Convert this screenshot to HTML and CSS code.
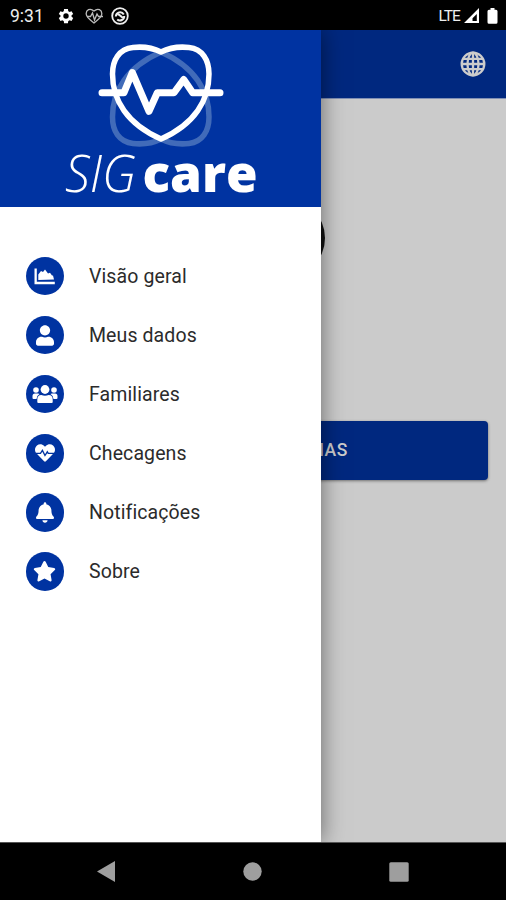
FILE: index.html
```html
<!DOCTYPE html>
<html lang="pt-BR">
<head>
<meta charset="utf-8">
<title>SIGcare</title>
<link rel="stylesheet" href="styles.css">
</head>
<body>
<div class="phone">
  <header class="status">
    <span class="clock">9:31</span>
    <svg class="gear" viewBox="0 0 24 24"><path fill="#fff" fill-rule="evenodd" d="M19.400 13a7.500 7.500 0 0 0 0-2l2.200-1.700-2.200-3.800-2.600 1a7.600 7.600 0 0 0-1.800-1L14.600 2.500h-5.200L9 5.500a7.600 7.600 0 0 0-1.800 1l-2.600-1-2.200 3.800L4.600 11a7.500 7.500 0 0 0 0 2l-2.200 1.700 2.200 3.800 2.600-1a7.600 7.600 0 0 0 1.800 1l.4 3h5.200l.4-3a7.600 7.600 0 0 0 1.800-1l2.600 1 2.200-3.800zM12 15.600a3.600 3.600 0 1 1 0-7.200 3.600 3.600 0 0 1 0 7.200z"/></svg>
    <svg class="beat" viewBox="0 0 18 16" fill="none" stroke="#bbb" stroke-width="1.300"><path d="M9 3C5-.5 1 2 1.200 6c.2 3.500 4.800 6.500 7.800 9 3-2.500 7.600-5.500 7.800-9C17 2 13-.5 9 3z"/><path d="M2 8.500h3.500L7.500 5l2 7 2.500-6 1.500 2.500H18"/></svg>
    <svg class="ring" viewBox="0 0 18 18" fill="none" stroke="#eee"><circle cx="9" cy="9" r="7.800" stroke-width="1.800"/><path d="M4.800 9.500a4.300 4.300 0 0 1 8-2M13.200 9a4.300 4.300 0 0 1-7 3.500M6.500 7.500c3-.5 3 3 6.500 3.500" stroke-width="2"/></svg>
    <span class="lte">LTE</span>
    <svg class="signal" viewBox="0 0 15 15"><path fill="#fff" fill-rule="evenodd" d="M15 0v15H0zM12.800 6 8.500 10.300V13h4.300z"/></svg>
    <svg class="battery" viewBox="0 0 11 16"><path fill="#fff" d="M3.500 0h4v1.800H9A1.500 1.500 0 0 1 10.500 3.300v11A1.500 1.500 0 0 1 9 15.800H2A1.500 1.500 0 0 1 .5 14.300v-11A1.500 1.500 0 0 1 2 1.800h1.500z"/></svg>
  </header>
  <div class="stage">
    <main class="page">
      <div class="appbar">
        <svg class="globe" viewBox="0 0 26 26" fill="none" stroke="#ccc" stroke-width="2.300"><circle cx="13" cy="13" r="11.300"/><ellipse cx="13" cy="13" rx="5.500" ry="11.300"/><path d="M13 1.500v23M1.500 13h23M3 7.800h20M3 18.200h20"/></svg>
      </div>
      <div class="avatar"></div>
      <div class="action">IAS</div>
    </main>
    <aside class="drawer">
      <div class="brand">
        <svg viewBox="0 30 320 177" fill="none" stroke-linecap="round" stroke-linejoin="round">
          <g stroke-width="5.500">
            <path stroke="#416bb9" d="M161 139C151 144 142 144.500 133 143.500 119 142 112.500 131 112.500 117 112.500 91 127 67 161 52 195 67 209 91 209 117 209 131 202.500 142 189 143.500 180 144.500 171 144 161 139z"/>
            <path stroke="#fff" d="M161 52C151 47 142 46.500 133 47.500 119 49 112.500 60 112.500 74 112.500 100 127 124 161 139 195 124 209 100 209 74 209 60 202.500 49 189 47.500 180 46.500 171 47 161 52z"/>
          </g>
          <path stroke="#fff" stroke-width="7" d="M102 92.700h22l8.300-20.200 16.700 38.800 8.300-18.600H174l9.700-13.200 9 13.200H220"/>
          <g fill="#fff" font-family="Open Sans">
            <text class="sig" x="65" y="192" textLength="71" lengthAdjust="spacingAndGlyphs">SIG</text>
            <text class="care" x="142.500" y="192" textLength="115" lengthAdjust="spacingAndGlyphs">care</text>
          </g>
        </svg>
      </div>
      <nav class="menu">
        <a class="item"><span class="dot"><svg viewBox="0 0 21 17" width="21" height="17"><path d="M.5.500h2.300v13.200h18v2.500H.5zM4.300 12V6.500L7 3l2 1 2-2.500 3 4 2-.7 2 2.700h1l1 4z"/></svg></span>Visão geral</a>
        <a class="item"><span class="dot"><svg viewBox="0 0 448 512" width="18" height="21"><path d="M224 256c70.700 0 128-57.300 128-128S294.700 0 224 0 96 57.300 96 128s57.300 128 128 128zm89.600 32h-16.700c-22.200 10.200-46.900 16-72.900 16s-50.600-5.800-72.900-16h-16.700C60.200 288 0 348.200 0 422.400V464c0 26.500 21.500 48 48 48h352c26.500 0 48-21.500 48-48v-41.600c0-74.200-60.200-134.400-134.400-134.400z"/></svg></span>Meus dados</a>
        <a class="item"><span class="dot"><svg viewBox="0 0 26 20" width="26" height="20"><circle cx="13" cy="5.500" r="4.400"/><circle cx="4" cy="6" r="2.800"/><circle cx="22" cy="6" r="2.800"/><path d="M5.300 18v-2.500q0-4.500 4-4.500 3.700 1.500 7.400 0 4 0 4 4.500V18q0 1-1 1H6.300q-1 0-1-1zM.5 14v-2q0-2.500 2.500-2.500h3q1 0 1.500.5-2.700 1.500-3 5H1.500q-1 0-1-1zM25.500 14v-2q0-2.500-2.500-2.500h-3q-1 0-1.500.5 2.700 1.500 3 5h3q1 0 1-1z"/></svg></span>Familiares</a>
        <a class="item"><span class="dot"><svg viewBox="0 0 512 512" width="20" height="20"><path d="M462.300 62.600C407.500 15.900 326 24.300 275.700 76.200L256 96.500l-19.700-20.300C186.100 24.300 104.500 15.900 49.700 62.600c-62.800 53.600-66.100 149.800-9.900 207.900l193.500 199.800c12.500 12.900 32.800 12.900 45.300 0l193.500-199.800c56.300-58.100 53-154.300-9.800-207.900z"/><path class="trace" d="M0 265h140l50-75 65 130 60-95 25 40h172"/></svg></span>Checagens</a>
        <a class="item"><span class="dot"><svg viewBox="0 0 448 512" width="18" height="21"><path d="M224 512c35.320 0 63.970-28.650 63.970-64H160.030c0 35.350 28.650 64 63.970 64zm215.390-149.710c-19.320-20.760-55.470-51.990-55.470-154.290 0-77.700-54.480-139.900-127.940-155.160V32c0-17.670-14.320-32-31.980-32s-31.980 14.330-31.980 32v20.840C118.560 68.100 64.080 130.300 64.080 208c0 102.300-36.150 133.530-55.470 154.290-6 6.450-8.660 14.160-8.610 21.710.11 16.400 12.980 32 32.100 32h383.800c19.120 0 32-15.600 32.100-32 .05-7.550-2.610-15.270-8.610-21.710z"/></svg></span>Notificações</a>
        <a class="item"><span class="dot"><svg viewBox="0 0 576 512" width="23" height="20.500"><path d="M259.300 17.800L194 150.200 47.900 171.500c-26.200 3.800-36.700 36.100-17.700 54.600l105.700 103-25 145.500c-4.500 26.300 23.200 46 46.400 33.700L288 439.600l130.700 68.700c23.200 12.200 50.900-7.400 46.400-33.700l-25-145.500 105.700-103c19-18.500 8.500-50.800-17.700-54.600L382 150.200 316.700 17.800c-11.700-23.600-45.600-23.900-57.400 0z"/></svg></span>Sobre</a>
      </nav>
    </aside>
  </div>
  <footer class="navbar">
    <svg width="18" height="21" viewBox="0 0 18 21"><path d="M0 10.500 18 0v21z"/></svg>
    <svg width="19" height="19" viewBox="0 0 19 19"><circle cx="9.500" cy="9.500" r="9.200"/></svg>
    <svg width="20" height="20" viewBox="0 0 20 20"><rect x=".3" y=".3" width="19.400" height="19.400" rx="1.500"/></svg>
  </footer>
</div>
</body>
</html>
```
FILE: styles.css
```css
* { box-sizing: border-box; }
body { margin: 0; font-family: Roboto, "Liberation Sans", sans-serif; }
svg { display: block; flex: none; }
.phone { width: 506px; height: 900px; display: flex; flex-direction: column; overflow: hidden; background: #000; }
.status { height: 30px; flex: none; display: flex; align-items: center; padding: 1px 8px 0 10px; color: #eee; }
.clock { font-size: 17.5px; width: 47px; }
.gear { width: 18px; height: 18px; }
.beat { width: 18px; height: 16px; margin-left: 10px; }
.ring { width: 18px; height: 18px; margin-left: 8px; }
.lte { margin-left: auto; font-size: 15.5px; letter-spacing: -0.9px; }
.signal { width: 15px; height: 15px; margin-left: 4px; }
.battery { width: 11px; height: 16px; margin-left: 8px; }
.stage { position: relative; height: 812px; flex: none; }
.page { height: 100%; background: #cbcbcb; display: flex; flex-direction: column; }
.appbar { height: 69px; flex: none; background: #00287f; display: flex; align-items: center; justify-content: flex-end; padding-right: 20px; border-bottom: 1px solid #8090b5; }
.globe { width: 26px; height: 26px; }
.avatar { width: 80px; height: 80px; flex: none; border-radius: 50%; background: #111; margin: 99px 0 0 245px; }
.action { height: 59px; flex: none; margin: 143px 18px 0; padding-left: 301px; border-radius: 4px; background: #00287f; color: #ccc; font-size: 17.5px; font-weight: 500; line-height: 59px; letter-spacing: 0.5px; box-shadow: 0 1px 3px rgba(0,0,0,.45); }
.drawer { position: absolute; inset: 0 auto 0 0; width: 320.5px; background: #fff; box-shadow: 0 0 22px rgba(0,0,0,.5); clip-path: inset(0 -40px 0 0); }
.brand { height: 177px; background: #0033a1; }
.brand svg { width: 320px; height: 177px; }
.sig { font-size: 51px; font-weight: 300; font-style: italic; }
.care { font-size: 52px; font-weight: 800; }
.menu { display: flex; flex-direction: column; padding-top: 39.5px; }
.item { height: 59.1px; display: flex; align-items: center; gap: 25px; padding-left: 25.5px; color: #2b2b2b; font-size: 19.5px; letter-spacing: 0.1px; }
.dot { width: 38.5px; height: 38.5px; border-radius: 50%; background: #0033a1; display: flex; align-items: center; justify-content: center; fill: #fff; }
.trace { fill: none; stroke: #0033a1; stroke-width: 34; }
.navbar { flex: 1; display: flex; justify-content: space-between; align-items: center; padding: 0 97px; fill: #9e9e9e; border-top: 1px solid #555; }
```
